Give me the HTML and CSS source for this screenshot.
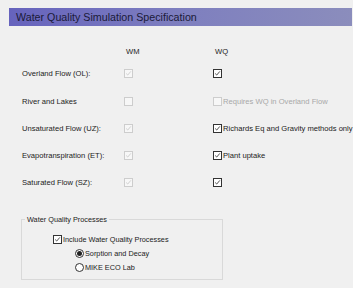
FILE: index.html
```html
<!DOCTYPE html>
<html>
<head>
<meta charset="utf-8">
<link rel="stylesheet" href="styles.css">
</head>
<body>
<div class="title">Water Quality Simulation Specification</div>
<div class="grid">
  <div></div>
  <div class="colhead">WM</div>
  <div class="colhead">WQ</div>

  <div class="label">Overland Flow (OL):</div>
  <div class="cell"><span class="cb dis"><svg viewBox="0 0 9 9"><polyline points="1.5,4.5 3.5,6.5 7.5,1.8"/></svg></span></div>
  <div class="cell"><span class="cb on"><svg viewBox="0 0 9 9"><polyline points="1.5,4.5 3.5,6.5 7.5,1.8"/></svg></span></div>

  <div class="label">River and Lakes</div>
  <div class="cell"><span class="cb dis"></span></div>
  <div class="cell"><span class="cb dis"></span><span class="txt gray">Requires WQ in Overland Flow</span></div>

  <div class="label">Unsaturated Flow (UZ):</div>
  <div class="cell"><span class="cb dis"><svg viewBox="0 0 9 9"><polyline points="1.5,4.5 3.5,6.5 7.5,1.8"/></svg></span></div>
  <div class="cell"><span class="cb on"><svg viewBox="0 0 9 9"><polyline points="1.5,4.5 3.5,6.5 7.5,1.8"/></svg></span><span class="txt">Richards Eq and Gravity methods only</span></div>

  <div class="label">Evapotranspiration (ET):</div>
  <div class="cell"><span class="cb dis"><svg viewBox="0 0 9 9"><polyline points="1.5,4.5 3.5,6.5 7.5,1.8"/></svg></span></div>
  <div class="cell"><span class="cb on"><svg viewBox="0 0 9 9"><polyline points="1.5,4.5 3.5,6.5 7.5,1.8"/></svg></span><span class="txt">Plant uptake</span></div>

  <div class="label">Saturated Flow (SZ):</div>
  <div class="cell"><span class="cb dis"><svg viewBox="0 0 9 9"><polyline points="1.5,4.5 3.5,6.5 7.5,1.8"/></svg></span></div>
  <div class="cell"><span class="cb on"><svg viewBox="0 0 9 9"><polyline points="1.5,4.5 3.5,6.5 7.5,1.8"/></svg></span></div>
</div>
<fieldset class="group">
  <legend>Water Quality Processes</legend>
  <div class="opt inc"><span class="cb on"><svg viewBox="0 0 9 9"><polyline points="1.5,4.5 3.5,6.5 7.5,1.8"/></svg></span><span class="txt">Include Water Quality Processes</span></div>
  <div class="opt rad"><span class="radio sel"></span><span class="txt">Sorption and Decay</span></div>
  <div class="opt rad"><span class="radio"></span><span class="txt">MIKE ECO Lab</span></div>
</fieldset>
</body>
</html>
```

FILE: styles.css
```css
html, body {
  margin: 0;
  padding: 0;
  background: #f0f0f0;
  width: 353px;
  height: 288px;
  overflow: hidden;
  font-family: "Liberation Sans", Arial, sans-serif;
  font-size: 7.6px;
  color: #222;
}
.title {
  margin: 8px 1px 0 9px;
  height: 18px;
  line-height: 18px;
  padding-left: 7px;
  font-size: 10.7px;
  color: #1a1a38;
  background: linear-gradient(to right, #6663bd, #7e7fbf 50%, #8b8dbc);
}
.grid {
  display: grid;
  grid-template-columns: 102px 89px 1fr;
  grid-template-rows: 17px 27px 28px 27px 27px 27px;
  padding-left: 22px;
  margin-top: 17px;
  align-items: center;
}
.colhead {
  padding-left: 2px;
  color: #222;
}
.cell {
  display: flex;
  align-items: center;
}
.cb {
  box-sizing: border-box;
  width: 9px;
  height: 9px;
  border: 1px solid #333;
  background: #fff;
  display: inline-flex;
  flex: none;
}
.cb svg {
  width: 7px;
  height: 7px;
  fill: none;
  stroke: #222;
  stroke-width: 1;
}
.cb.dis {
  border-color: #cdcdcd;
  background: #f7f7f7;
}
.cb.dis svg {
  stroke: #c4c4c4;
}
.txt {
  margin-left: 1px;
  white-space: nowrap;
}
.gray {
  color: #a8a8a8;
}
.group {
  box-sizing: border-box;
  margin: 19px 0 0 21px;
  width: 202px;
  height: 65px;
  border: 1px solid #d9d9d9;
  padding: 0;
  font-size: 7.3px;
}
.group legend {
  padding: 0 2px;
  margin-left: 3px;
  color: #222;
}
.opt {
  display: flex;
  align-items: center;
  height: 14px;
}
.inc {
  margin-left: 31px;
  margin-top: 8px;
}
.rad {
  margin-left: 53px;
}
.radio {
  box-sizing: border-box;
  width: 9px;
  height: 9px;
  border: 1px solid #333;
  border-radius: 50%;
  background: #fff;
  display: inline-flex;
  align-items: center;
  justify-content: center;
  flex: none;
}
.radio.sel::after {
  content: "";
  width: 5px;
  height: 5px;
  border-radius: 50%;
  background: #222;
}
```
